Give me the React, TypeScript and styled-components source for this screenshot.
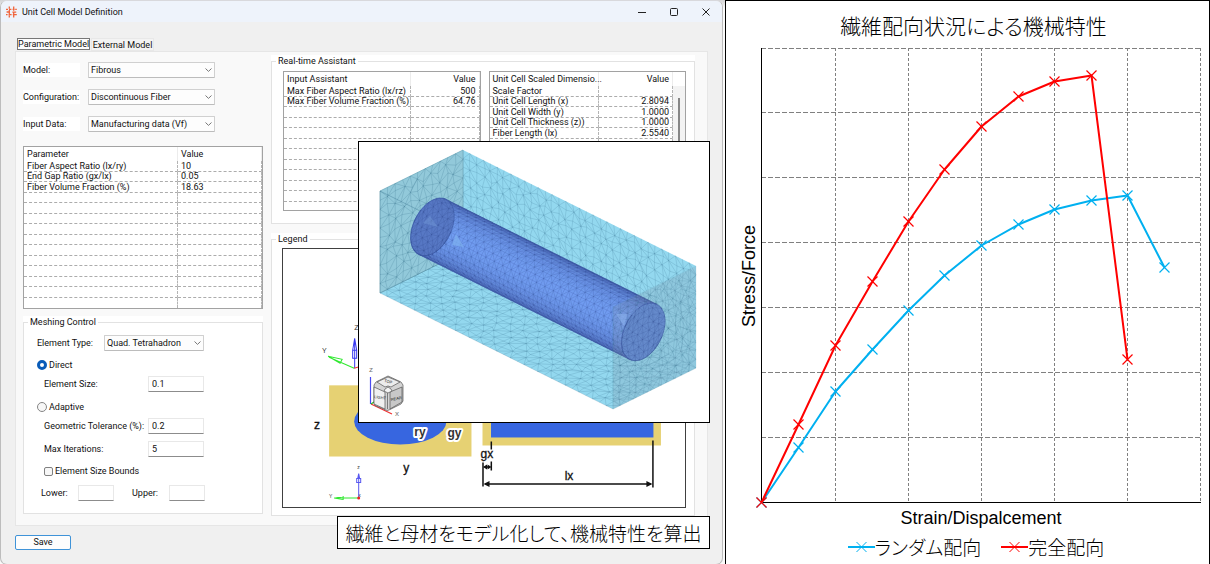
import React from "react";
import styled, { createGlobalStyle } from "styled-components";

const GlobalStyle = createGlobalStyle`
  * { box-sizing: border-box; }
  body { margin: 0; background: #fff; }
  button, input, select { font: inherit; color: inherit; }
`;

const uiFont = `Roboto, "Noto Sans", sans-serif`;
const jpFont = `"Noto Sans CJK JP", sans-serif`;

/* ---------- page ---------- */

const Page = styled.main`
  display: grid;
  grid-template-columns: minmax(0, 725fr) minmax(0, 485fr);
  min-height: 100vh;
`;

const ModelPane = styled.section`
  position: relative;
  display: flex;
  padding-right: 2px;
  background: linear-gradient(#d2d2d4, #fafafa 8px);
`;

const Dialog = styled.div`
  flex: 1;
  min-width: 0;
  border: 1px solid #bdbdbd;
  border-top: 1px solid #d8d8dc;
  border-radius: 7px;
  background: #f0f0f0;
  color: #111;
  font: 9px/12px ${uiFont};
  overflow: hidden;
`;

const TitleBar = styled.header`
  display: flex;
  align-items: center;
  height: 21px;
  padding: 0 0 0 5px;
  background: #eef3fb;
`;

const DialogTitle = styled.h1`
  flex: 1;
  margin: 0 0 0 5px;
  font-size: 9px;
  font-weight: 400;
`;

const WindowButton = styled.button`
  display: flex;
  align-items: center;
  justify-content: center;
  width: 32px;
  height: 21px;
  padding: 0;
  border: 0;
  background: transparent;
`;

const TabList = styled.div`
  display: flex;
  gap: 1px;
  margin: 16px 0 0 16px;
  height: 13px;
`;

const Tab = styled.button<{ $active?: boolean }>`
  height: ${(p) => (p.$active ? 12 : 13)}px;
  width: ${(p) => (p.$active ? 73 : 63)}px;
  padding: 0;
  border: 1px solid ${(p) => (p.$active ? "#777" : "#e8e8e8")};
  background: ${(p) => (p.$active ? "#fdfdfd" : "#f3f3f3")};
  line-height: 10px;
  white-space: nowrap;
`;

const TabPanel = styled.div`
  display: flex;
  gap: 8px;
  margin: 0 14px;
  padding: 3px 12px 9px 7px;
  border: 1px solid #e6e6e6;
  background: #f9f9f9;
`;

const SideColumn = styled.div`
  flex: none;
  width: 240px;
`;

const WideColumn = styled.div`
  flex: 1;
  min-width: 0;
  display: flex;
  flex-direction: column;
  gap: 9px;
`;

/* ---------- form parts ---------- */

const SelectRows = styled.div`
  display: flex;
  flex-direction: column;
  gap: 11px;
  padding: 7px 0 14px;
`;

const SelectRow = styled.div`
  display: flex;
  align-items: center;
  gap: 8px;
  height: 16px;
`;

const RowLabel = styled.label`
  width: 57px;
  line-height: 14px;
  background: #fff;
`;

const SelectShell = styled.span<{ $width: number }>`
  position: relative;
  display: block;
  width: ${(p) => p.$width}px;
  height: 16px;
`;

const SelectBox = styled.select`
  appearance: none;
  display: block;
  width: 100%;
  height: 16px;
  padding: 0 14px 0 2px;
  border: 1px solid #d0d0d0;
  border-bottom-color: #bcbcbc;
  border-radius: 1px;
  background: #fdfdfd;
  line-height: 12px;
`;

const SelectArrow = styled.svg`
  position: absolute;
  right: 3px;
  top: 6px;
  pointer-events: none;
`;

const GroupShell = styled.div<{ $top?: number }>`
  margin-top: ${(p) => p.$top ?? 0}px;
  background: #fff;
`;

const Group = styled.fieldset`
  min-width: 0;
  margin: 0;
  padding: 0 4px;
  border: 1px solid #e2e2e2;
`;

const GroupTitle = styled.legend`
  padding: 0 2px;
  line-height: 12px;
`;

const MeshForm = styled.div`
  padding: 7px 0 12px 9px;
`;

const MeshRow = styled.div<{ $gap?: number; $indent?: number }>`
  display: flex;
  align-items: center;
  height: 16px;
  margin-top: ${(p) => p.$gap ?? 0}px;
  padding-left: ${(p) => p.$indent ?? 0}px;
`;

const MeshLabel = styled.label<{ $width: number }>`
  flex: none;
  width: ${(p) => p.$width}px;
  white-space: nowrap;
`;

const TextBox = styled.input<{ $width: number }>`
  width: ${(p) => p.$width}px;
  height: 16px;
  padding: 0 3px;
  border: 1px solid #e8e8e8;
  border-bottom-color: #8c8c8c;
  background: #fff;
`;

const ChoiceLabel = styled.label`
  display: flex;
  align-items: center;
  gap: 2px;
`;

const Radio = styled.input`
  appearance: none;
  width: 10px;
  height: 10px;
  margin: 0;
  border: 1px solid #858585;
  border-radius: 50%;
  background: #f7f7f7;
  &:checked {
    border: 3px solid #0a5cb8;
    background: #fff;
  }
`;

const Tick = styled.input`
  appearance: none;
  width: 9px;
  height: 9px;
  margin: 0;
  border: 1px solid #808080;
  border-radius: 2px;
  background: #f7f7f7;
`;

const SpacedLabel = styled(MeshLabel)`
  margin-left: 18px;
`;

const SaveButton = styled.button`
  display: block;
  width: 56px;
  height: 15px;
  margin: 9px 0 14px 14px;
  padding: 0;
  border: 1px solid #3f93d8;
  border-radius: 2px;
  background: #fdfdfd;
  line-height: 12px;
`;

/* ---------- tables ---------- */

const TableFrame = styled.div<{ $scroll?: boolean }>`
  position: relative;
  border: 1px solid #a2a2a2;
  background: #fff;
  padding-right: ${(p) => (p.$scroll ? 12 : 0)}px;
`;

const DataTable = styled.table<{ $numeric?: boolean }>`
  width: 100%;
  table-layout: fixed;
  border-collapse: separate;
  border-spacing: 0;

  th, td {
    padding: 0 3px;
    border-right: 1px dashed #b4b4b4;
    text-align: left;
    font-weight: 400;
    white-space: nowrap;
  }
  th {
    height: 14px;
    line-height: 14px;
    border-right: 1px solid #ececec;
  }
  td {
    height: 11px;
    line-height: 10px;
    border-bottom: 1px dashed #acacac;
  }
  tr:nth-child(even) td { height: 10px; line-height: 9px; }
  tbody tr:last-child td {
    height: ${(p) => (p.$numeric ? 8 : 10)}px;
    border-bottom: 0;
  }
  td:last-child, th:last-child {
    text-align: ${(p) => (p.$numeric ? "right" : "left")};
  }
`;

const ValueCol = styled.col<{ $width: number }>`
  width: ${(p) => p.$width}px;
`;

const ScrollTrack = styled.div`
  position: absolute;
  top: 14px;
  right: 0;
  bottom: 0;
  width: 12px;
  padding: 12px 5px;
  background: #f3f3f3;
`;

const ScrollThumb = styled.div`
  height: 60px;
  width: 2px;
  background: #868686;
`;

const AssistantTables = styled.div`
  display: grid;
  grid-template-columns: 1fr 1fr;
  gap: 8px;
  padding: 4px 4px 12px 7px;
`;

const LegendArea = styled.div`
  padding: 3px 4px 7px 6px;
`;

const LegendDrawing = styled.svg`
  display: block;
  width: 100%;
  border: 1px solid #404040;
  background: #fff;
`;

/* ---------- overlays ---------- */

const ModelView = styled.div`
  position: absolute;
  top: 141px;
  right: 15px;
  width: 352px;
  height: 282px;
  border: 1px solid #000;
  background: #fff;
  svg { display: block; }
`;

const Caption = styled.p`
  position: absolute;
  top: 516px;
  right: 15px;
  width: 373px;
  margin: 0;
  border: 1px solid #000;
  background: #fff;
  color: #000;
  font: 300 19px/31px ${jpFont};
  font-feature-settings: "palt";
  text-align: center;
  white-space: nowrap;
`;

/* ---------- chart ---------- */

const ChartFigure = styled.figure`
  display: flex;
  flex-direction: column;
  margin: 0;
  padding-right: 8px;
  border: 1px solid #000;
  background: #fff;
  color: #000;
`;

const ChartTitle = styled.h2`
  margin: 9px 0 8px 20px;
  font: 300 21px/30px ${jpFont};
  font-feature-settings: "palt";
  text-align: center;
`;

const PlotRow = styled.div`
  display: flex;
`;

const YLabel = styled.div`
  flex: none;
  width: 35px;
  padding-right: 11px;
  writing-mode: vertical-rl;
  rotate: 180deg;
  font: 18px/24px "Liberation Sans", sans-serif;
  text-align: center;
`;

const Plot = styled.svg`
  flex: 1;
  min-width: 0;
  overflow: visible;
`;

const XLabel = styled.div`
  margin: 2px 0 0 35px;
  font: 18px/24px "Liberation Sans", sans-serif;
  text-align: center;
`;

const SeriesLegend = styled.ul`
  display: flex;
  justify-content: center;
  gap: 20px;
  margin: 3px 0 0 25px;
  padding: 0;
  list-style: none;
  font: 300 19px/28px ${jpFont};
  font-feature-settings: "palt";
`;

const SeriesItem = styled.li`
  display: flex;
  align-items: center;
`;

/* ---------- components ---------- */

type Row = [string, string];

function GridTable(props: {
  head: Row;
  rows: Row[];
  count: number;
  valueWidth: number;
  numeric?: boolean;
  scroll?: boolean;
}) {
  const rows: Row[] = [...props.rows];
  while (rows.length < props.count) rows.push(["", ""]);
  return (
    <TableFrame $scroll={props.scroll}>
      <DataTable $numeric={props.numeric}>
        <colgroup>
          <col />
          <ValueCol $width={props.valueWidth} />
        </colgroup>
        <thead>
          <tr>
            <th scope="col">{props.head[0]}</th>
            <th scope="col">{props.head[1]}</th>
          </tr>
        </thead>
        <tbody>
          {rows.map(([name, value], i) => (
            <tr key={i}>
              <td>{name}</td>
              <td>{value}</td>
            </tr>
          ))}
        </tbody>
      </DataTable>
      {props.scroll && (
        <ScrollTrack>
          <ScrollThumb />
        </ScrollTrack>
      )}
    </TableFrame>
  );
}

function Dropdown({ id, value, width }: { id: string; value: string; width: number }) {
  return (
    <SelectShell $width={width}>
      <SelectBox id={id} defaultValue={value}>
        <option>{value}</option>
      </SelectBox>
      <SelectArrow width="7" height="4" viewBox="0 0 7 4">
        <path d="M.5 .5 3.5 3.4 6.5 .5" fill="none" stroke="#777" />
      </SelectArrow>
    </SelectShell>
  );
}

function AppLogo() {
  return (
    <svg width="11" height="12" viewBox="0 0 11 12" fill="none" stroke="#f0643c" strokeWidth="1.3">
      <path d="M3.3 .5v2.3M3.3 4v4.2M3.3 9.3v2.2M7.7 .5v4.2M7.7 6v2M7.7 9v2.5" />
      <path d="M0 3.4h2M3 3.4h2.4M6.6 3.4h1.8M9.2 3.4h1.6M0 8.6h1.6M2.6 8.6h3M6.8 8.6h4M.6 6h3.4M6.4 6.2h3.8" />
    </svg>
  );
}

/* Unit cell mesh: u runs along the fibre, v into depth, w upward. */
type Pt = [number, number];
const project = (u: number, v: number, w: number): Pt => [
  21 + 233 * u + 83 * v,
  151 + 116 * u - 41 * v - 102 * w,
];
const hash = (a: number, b: number) => {
  const x = Math.sin(a * 127.1 + b * 311.7) * 43758.5453;
  return x - Math.floor(x);
};
const f = (p: Pt) => `${p[0].toFixed(1)} ${p[1].toFixed(1)}`;

function meshPath(at: (s: number, t: number) => Pt, n: number, m: number, jitter: number) {
  const node = (i: number, j: number) => {
    const free = i > 0 && j > 0 && i < n && j < m;
    const a = free ? (hash(i, j) - 0.5) * jitter : 0;
    const b = free ? (hash(j + 50, i) - 0.5) * jitter : 0;
    return f(at((i + a) / n, (j + b) / m));
  };
  let d = "";
  for (let i = 0; i < n; i++) {
    for (let j = 0; j < m; j++) {
      d += `M${node(i, j + 1)}L${node(i, j)}L${node(i + 1, j)}`;
      d += (i + j) % 2
        ? `M${node(i, j)}L${node(i + 1, j + 1)}`
        : `M${node(i + 1, j)}L${node(i, j + 1)}`;
    }
  }
  return d;
}

const polygon = (...pts: Pt[]) => pts.map((p) => f(p)).join(" ");
const R = 0.262;
const ring = (u: number, deg: number): Pt => {
  const a = (deg * Math.PI) / 180;
  return project(u, 0.5 + R * Math.cos(a), 0.5 + R * Math.sin(a));
};
const U0 = 0.047;
const U1 = 0.952;
const START = 51;
const cap = (u: number) => polygon(...Array.from({ length: 48 }, (_, i) => ring(u, i * 7.5)));
/* Square grid bent onto the disc, so that the cap triangles stay even in size. */
const capMesh = (u: number) =>
  meshPath(
    (s, t) => {
      const x = s * 2 - 1;
      const y = t * 2 - 1;
      return project(
        u,
        0.5 + R * x * Math.sqrt(1 - (y * y) / 2),
        0.5 + R * y * Math.sqrt(1 - (x * x) / 2)
      );
    },
    8,
    8,
    0.4
  );
const STRIPS = 18;
const strips = Array.from({ length: STRIPS }, (_, i) => {
  const a = START + (i * 180) / STRIPS;
  const b = START + ((i + 1) * 180) / STRIPS;
  const light = Math.pow(Math.sin(((i + 0.5) / STRIPS) * Math.PI), 1.3);
  const mix = (lo: number, hi: number) => Math.round(lo + (hi - lo) * light);
  return {
    points: polygon(ring(U0, a), ring(U1, a), ring(U1, b), ring(U0, b)),
    fill: `rgb(${mix(74, 112)},${mix(102, 155)},${mix(182, 240)})`,
  };
});

function UnitCellView() {
  const line = { fill: "none", stroke: "#1f5a78", strokeWidth: 0.5 };
  return (
    <svg width="350" height="280" viewBox="0 0 350 280" role="img" aria-label="Unit cell mesh">
      <polygon
        points={polygon(project(0, 0, 1), project(0, 1, 1), project(1, 1, 1), project(1, 1, 0), project(1, 0, 0), project(0, 0, 0))}
        fill="#93d8ef"
      />
      <path d={meshPath((s, t) => project(s, 1, t), 34, 12, 0.5)} {...line} opacity=".3" />
      <path d={meshPath((s, t) => project(s, t, 0), 34, 12, 0.5)} {...line} opacity=".3" />
      <polygon
        points={polygon(project(0, 0, 1), project(0, 1, 1), project(0, 1, 0), project(0, 0, 0))}
        fill="#92c9da"
        stroke="#6da3b4"
        strokeWidth=".6"
      />
      <path d={meshPath((s, t) => project(0, s, t), 11, 11, 0.7)} {...line} opacity=".34" />
      <path d={`M${f(project(0, 0, 1))}L${f(project(0.2, 0, 1))}`} {...line} opacity=".6" />

      {strips.map((s, i) => (
        <polygon key={i} points={s.points} fill={s.fill} stroke={s.fill} strokeWidth=".5" />
      ))}
      <path
        d={meshPath((s, t) => ring(U0 + (U1 - U0) * s, START + 180 * t), 50, 15, 0)}
        fill="none"
        stroke="#1c3478"
        strokeWidth=".5"
        opacity=".28"
      />
      <polygon points={cap(U0)} fill="#5676c2" stroke="#3f5da8" strokeWidth=".8" opacity=".9" />
      <path d={capMesh(U0)} fill="none" stroke="#1c3478" strokeWidth=".5" opacity=".28" />
      <polygon points="64,81 71,74 79,85" fill="#6f95d6" opacity=".5" />
      <polygon points="93,103 97,92 105,105" fill="#7eb0f0" opacity=".7" />

      <polygon
        points={polygon(project(1, 0, 1), project(1, 1, 1), project(1, 1, 0), project(1, 0, 0))}
        fill="#8292a6"
        stroke="#5c96ac"
        strokeWidth=".6"
        opacity=".22"
      />
      <path d={meshPath((s, t) => project(1, s, t), 11, 11, 0.7)} {...line} opacity=".22" />
      <polygon points={cap(U1)} fill="#5c7cc8" stroke="#3d58a4" strokeWidth=".8" opacity=".8" />
      <path d={capMesh(U1)} fill="none" stroke="#1c3478" strokeWidth=".5" opacity=".28" />
      <polygon points="257,172 268,172 265,184" fill="#8ab0ec" opacity=".6" />

      <g strokeWidth="1.2" fill="none">
        <path d="M11.5 235v27" stroke="#4a4af0" />
        <path d="m12 262 21 10" stroke="#f03030" />
        <path d="m12 262 3-2" stroke="#20c020" />
      </g>
      <g fontFamily="Liberation Sans, sans-serif" fontSize="8" fill="#777">
        <text x="10" y="230">z</text>
        <text x="36" y="274">x</text>
      </g>
      <g stroke="#555" strokeWidth=".7" strokeLinejoin="round">
        <path d="m15 243 2-3 12-6 13 6 2 3v16l-2 3-12 6-2 .5-12-5-1-3z" fill="#d4d4d4" />
        <path d="m18 240 11-5 12 5-9 5-3-1-3 1z" fill="#ececec" />
        <path d="m15 245 11 5v17l-11-5z" fill="#f0f0f0" />
        <path d="m31 250 12-5v15l-12 7z" fill="#c8c8c8" />
        <path d="m26 247 3-2 3 2 1 2-4 2-4-2z" fill="#f4f4f4" />
        <path d="M28.500 251v16" fill="none" />
      </g>
      <g fontFamily="Liberation Sans, sans-serif" fontSize="4" fill="#222">
        <text x="25" y="240" transform="rotate(12 25 240)">TOP</text>
        <text x="15" y="256" transform="rotate(8 15 256)">LIGHT</text>
        <text x="32" y="259" transform="rotate(-10 32 259)">REAR</text>
      </g>
    </svg>
  );
}

function LegendPicture() {
  return (
    <LegendDrawing viewBox="0 0 401 257" role="img" aria-label="Unit cell dimensions">
      <g fill="none" strokeWidth="1">
        <path d="M71.500 119v-30M69.500 109h4v-8h-4zM69.500 101l2-12 2 12" stroke="#3838f0" />
        <path d="M71 119 46 108M57 114l2-4-14-3z" stroke="#30e830" />
        <path d="m71 119 10-3" stroke="#f03030" />
      </g>
      <rect x="46" y="136" width="142" height="71" fill="#e6d173" />
      <ellipse cx="117" cy="172" rx="46" ry="23" fill="#3766e0" />
      <rect x="199" y="136" width="178" height="60" fill="#e6d173" />
      <rect x="207.500" y="136" width="162" height="52" fill="#3766e0" />
      <g fontFamily="Liberation Sans, sans-serif" fontSize="12" fill="#111" stroke="#111" strokeWidth=".3">
        <text x="31" y="180">z</text>
        <text x="120" y="222">y</text>
        <text x="197" y="208">gx</text>
        <text x="281" y="230">lx</text>
      </g>
      <g fontFamily="Liberation Sans, sans-serif" fontSize="12" fontWeight="700" stroke="#fff" strokeWidth="4" strokeLinejoin="round" fill="#333" paintOrder="stroke">
        <text x="131" y="187">ry</text>
        <text x="164" y="188">gy</text>
      </g>
      <g fontFamily="Liberation Sans, sans-serif" fontSize="7" fill="#333">
        <text x="71" y="81">Z</text>
        <text x="39" y="104">Y</text>
      </g>
      <g fontFamily="Liberation Sans, sans-serif" fontSize="5" fill="#333">
        <text x="74" y="219">z</text>
        <text x="46" y="248">Y</text>
        <text x="75" y="247">x</text>
      </g>
      <g fill="none" strokeWidth="1">
        <path d="M75.500 248v-24M73.500 233h4v-4h-4zM74.500 229l1-5 1 5" stroke="#5858f0" />
        <path d="M75 248.500H51M60 246.500v4M60 247l-9 1.500 9 1.500" stroke="#30e830" />
      </g>
      <circle cx="75.500" cy="248.500" r="1.500" fill="#f02020" />
      <g stroke="#111" strokeWidth="1.500" fill="none">
        <path d="M199.500 213v24M207.800 192v8M207.800 212v9M369 191v47M202 234.500h165M201 217.500h5" />
      </g>
      <path d="m200 234.500 6-3v6zM368.500 234.500l-6-3v6zM199.500 217.500l4-2.500v5zM208 217.500l-4-2.500v5z" fill="#111" />
    </LegendDrawing>
  );
}

const redLine: Pt[] = [
  [0, 455], [37, 377], [74, 298], [111, 234], [147, 174], [183, 122],
  [220, 79], [257, 49], [293, 34], [330, 28], [366, 312],
];
const blueLine: Pt[] = [
  [0, 455], [37, 400], [74, 344], [111, 302], [147, 263], [183, 228],
  [220, 198], [257, 177], [293, 162], [330, 153], [366, 148], [403, 220],
];
const RED = "#ff0000";
const BLUE = "#00b0f0";

function Series({ points, color }: { points: Pt[]; color: string }) {
  return (
    <g fill="none" stroke={color}>
      <polyline points={points.map((p) => p.join(",")).join(" ")} strokeWidth="2" strokeLinejoin="round" />
      <path d={points.map(([x, y]) => `M${x - 5} ${y - 5}l10 10m0-10l-10 10`).join("")} strokeWidth="1.2" />
    </g>
  );
}

function SeriesKey({ color }: { color: string }) {
  return (
    <svg width="27" height="12" viewBox="0 0 27 12" fill="none" stroke={color}>
      <path d="M0 6h27" strokeWidth="2" />
      <path d="m8.500 1 10 10m0-10-10 10" />
    </svg>
  );
}

function Chart() {
  return (
    <ChartFigure>
      <ChartTitle>繊維配向状況による機械特性</ChartTitle>
      <PlotRow>
        <YLabel>Stress/Force</YLabel>
        <Plot viewBox="0 0 440 456" role="img" aria-label="Stress and strain curves">
          <g stroke="#808080" strokeDasharray="5 2" fill="none">
            {[0.5, 64.5, 129.5, 194.5, 259.5, 324.5, 389.5].map((y) => (
              <path key={y} d={`M0 ${y}H440`} />
            ))}
          </g>
          <g stroke="#808080" strokeDasharray="3 2" fill="none">
            {[74.5, 147.5, 220.5, 293.5, 366.5, 439.5].map((x) => (
              <path key={x} d={`M${x} 0V454`} />
            ))}
          </g>
          <path d="M.5 0V454.500H440" fill="none" stroke="#000" />
          <g transform="translate(.5 -.5)">
            <Series points={blueLine} color={BLUE} />
            <Series points={redLine} color={RED} />
          </g>
        </Plot>
      </PlotRow>
      <XLabel>Strain/Dispalcement</XLabel>
      <SeriesLegend>
        <SeriesItem><SeriesKey color={BLUE} />ランダム配向</SeriesItem>
        <SeriesItem><SeriesKey color={RED} />完全配向</SeriesItem>
      </SeriesLegend>
    </ChartFigure>
  );
}

function MeshGroup() {
  return (
    <Group>
      <GroupTitle>Meshing Control</GroupTitle>
      <MeshForm>
        <MeshRow>
          <MeshLabel htmlFor="element-type" $width={67}>Element Type:</MeshLabel>
          <Dropdown id="element-type" value="Quad. Tetrahadron" width={100} />
        </MeshRow>
        <MeshRow $gap={6}>
          <ChoiceLabel><Radio type="radio" name="sizing" defaultChecked />Direct</ChoiceLabel>
        </MeshRow>
        <MeshRow $gap={3} $indent={7}>
          <MeshLabel htmlFor="element-size" $width={104}>Element Size:</MeshLabel>
          <TextBox id="element-size" defaultValue="0.1" $width={56} />
        </MeshRow>
        <MeshRow $gap={7}>
          <ChoiceLabel><Radio type="radio" name="sizing" />Adaptive</ChoiceLabel>
        </MeshRow>
        <MeshRow $gap={3} $indent={7}>
          <MeshLabel htmlFor="tolerance" $width={104}>Geometric Tolerance (%):</MeshLabel>
          <TextBox id="tolerance" defaultValue="0.2" $width={56} />
        </MeshRow>
        <MeshRow $gap={7} $indent={7}>
          <MeshLabel htmlFor="iterations" $width={104}>Max Iterations:</MeshLabel>
          <TextBox id="iterations" defaultValue="5" $width={56} />
        </MeshRow>
        <MeshRow $gap={6} $indent={7}>
          <ChoiceLabel><Tick type="checkbox" />Element Size Bounds</ChoiceLabel>
        </MeshRow>
        <MeshRow $gap={6} $indent={4}>
          <MeshLabel htmlFor="lower" $width={37}>Lower:</MeshLabel>
          <TextBox id="lower" $width={36} />
          <SpacedLabel htmlFor="upper" $width={37}>Upper:</SpacedLabel>
          <TextBox id="upper" $width={36} />
        </MeshRow>
      </MeshForm>
    </Group>
  );
}

export default function App() {
  return (
    <>
      <GlobalStyle />
      <Page>
        <ModelPane>
          <Dialog>
            <TitleBar>
              <AppLogo />
              <DialogTitle>Unit Cell Model Definition</DialogTitle>
              <WindowButton aria-label="Minimize">
                <svg width="8" height="8"><path d="M0 4.500h8" stroke="#222" /></svg>
              </WindowButton>
              <WindowButton aria-label="Maximize">
                <svg width="8" height="8"><rect x=".5" y=".5" width="7" height="7" rx="1" fill="none" stroke="#222" /></svg>
              </WindowButton>
              <WindowButton aria-label="Close">
                <svg width="8" height="8"><path d="m.5.5 7 7m0-7-7 7" stroke="#222" /></svg>
              </WindowButton>
            </TitleBar>
            <TabList role="tablist">
              <Tab role="tab" aria-selected="true" $active>Parametric Model</Tab>
              <Tab role="tab" aria-selected="false">External Model</Tab>
            </TabList>
            <TabPanel role="tabpanel">
              <SideColumn>
                <SelectRows>
                  <SelectRow>
                    <RowLabel htmlFor="model">Model:</RowLabel>
                    <Dropdown id="model" value="Fibrous" width={127} />
                  </SelectRow>
                  <SelectRow>
                    <RowLabel htmlFor="configuration">Configuration:</RowLabel>
                    <Dropdown id="configuration" value="Discontinuous Fiber" width={127} />
                  </SelectRow>
                  <SelectRow>
                    <RowLabel htmlFor="input-data">Input Data:</RowLabel>
                    <Dropdown id="input-data" value="Manufacturing data (Vf)" width={127} />
                  </SelectRow>
                </SelectRows>
                <GridTable
                  head={["Parameter", "Value"]}
                  rows={[
                    ["Fiber Aspect Ratio (lx/ry)", "10"],
                    ["End Gap Ratio (gx/lx)", "0.05"],
                    ["Fiber Volume Fraction (%)", "18.63"],
                  ]}
                  count={14}
                  valueWidth={84}
                />
                <GroupShell $top={7}>
                  <MeshGroup />
                </GroupShell>
              </SideColumn>
              <WideColumn>
                <GroupShell>
                  <Group>
                    <GroupTitle>Real-time Assistant</GroupTitle>
                    <AssistantTables>
                      <GridTable
                        head={["Input Assistant", "Value"]}
                        rows={[
                          ["Max Fiber Aspect Ratio (lx/rz)", "500"],
                          ["Max Fiber Volume Fraction (%)", "64.76"],
                        ]}
                        count={12}
                        valueWidth={69}
                        numeric
                      />
                      <GridTable
                        head={["Unit Cell Scaled Dimensio...", "Value"]}
                        rows={[
                          ["Scale Factor", ""],
                          ["Unit Cell Length (x)", "2.8094"],
                          ["Unit Cell Width (y)", "1.0000"],
                          ["Unit Cell Thickness (z))", "1.0000"],
                          ["Fiber Length (lx)", "2.5540"],
                        ]}
                        count={12}
                        valueWidth={74}
                        numeric
                        scroll
                      />
                    </AssistantTables>
                  </Group>
                </GroupShell>
                <GroupShell>
                  <Group>
                    <GroupTitle>Legend</GroupTitle>
                    <LegendArea>
                      <LegendPicture />
                    </LegendArea>
                  </Group>
                </GroupShell>
              </WideColumn>
            </TabPanel>
            <SaveButton>Save</SaveButton>
          </Dialog>
          <ModelView>
            <UnitCellView />
          </ModelView>
          <Caption>繊維と母材をモデル化して、機械特性を算出</Caption>
        </ModelPane>
        <Chart />
      </Page>
    </>
  );
}
